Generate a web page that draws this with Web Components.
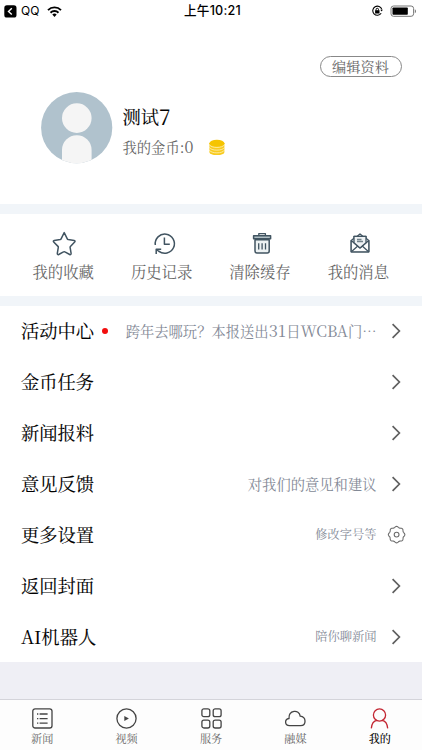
<!DOCTYPE html>
<html lang="zh-CN">
<head>
<meta charset="utf-8">
<title>我的</title>
<style>
html,body{margin:0;padding:0;background:#fff}
body{width:422px;height:750px;overflow:hidden;font-family:"Noto Serif CJK SC","Liberation Serif","Noto Sans CJK SC",serif;color:#000}
</style>
</head>
<body>
<profile-page></profile-page>
<script>
const define=(name,css,html)=>customElements.define(name,class extends HTMLElement{
  constructor(){
    super();
    const t=document.createElement('template');
    t.innerHTML=`<style>*{box-sizing:border-box}svg{display:block;flex:none}${css}</style>${typeof html==='function'?html(this):html}`;
    this.attachShadow({mode:'open'}).append(t.content.cloneNode(true));
  }
});

define('status-bar',`
:host{display:grid;grid-template-columns:1fr auto 1fr;align-items:center;height:22px;padding:0 5px 0 4px;font:12.5px/22px "Inter","Noto Sans CJK SC",sans-serif;box-sizing:border-box}
.l,.r{display:flex;align-items:center}.r{justify-content:flex-end;gap:7px}
.qq{margin:0 7px 0 4px;font-size:12px;width:19px}.time{font-weight:500;font-size:12.6px;letter-spacing:.25px;padding-left:4px}
`,`
<div class="l"><svg width="13" height="13" viewBox="0 0 13 13"><rect x=".3" y=".3" width="12.2" height="12.2" rx="2.6"/><path d="M7.8 3.2 4.5 6.4l3.3 3.2" fill="none" stroke="#fff" stroke-width="1.4"/></svg><span class="qq">QQ</span>
<svg width="15" height="11" viewBox="0 0 15 11" fill="none" stroke="#000" stroke-width="1.9"><path d="M1 4.1a9.2 9.2 0 0 1 13 0M3.5 6.7a5.7 5.7 0 0 1 8 0"/><path d="M7.5 11 5.3 8.6a3.2 3.2 0 0 1 4.4 0Z" fill="#000" stroke="none"/></svg></div>
<span class="time">上午10:21</span>
<div class="r"><svg width="11" height="12" viewBox="0 0 11 12" fill="none" stroke="#000"><path d="M9.8 4.4A4.6 4.6 0 1 0 9.2 8.3" stroke-width="1.1"/><path d="m8.3 4.8 1.3 1.8 1.3-1.8" fill="#000" stroke="none"/><rect x="3.1" y="5.2" width="4.4" height="3.3" fill="#000" stroke="none"/><path d="M4.1 5.4V4.5a1.2 1.2 0 0 1 2.4 0v.9"/></svg>
<svg width="27" height="13" viewBox="0 0 27 13"><rect x="1" y="1" width="22.6" height="10.3" rx="2.5" fill="none" stroke="#777"/><rect x="2.5" y="2.6" width="15.3" height="7.2" rx=".7"/><path d="M24.8 4.2v4c1.6-.6 1.6-3.4 0-4" fill="#777"/></svg></div>`);

define('user-card',`
:host{display:grid;grid-template-columns:71px 1fr;grid-template-rows:22px 71px;row-gap:14px;column-gap:10.5px;padding:34px 20.5px 0 41px;height:182px;box-sizing:border-box}
.edit{grid-column:1/3;justify-self:end;width:82px;height:21px;border:1px solid #888;border-radius:11px;background:#fff;color:#666;font-family:inherit;font-size:14.2px;line-height:18px;padding:0 0 1px;text-align:center;white-space:nowrap}
.info{display:flex;flex-direction:column;padding-top:9px}
.name{font-size:18.3px;line-height:31px;display:flex;-webkit-text-stroke:.1px #000}.name span{font-size:21px}
.coins{display:flex;align-items:center;gap:15px;font-size:14.3px;line-height:29px;color:#666}.coins i{font-style:normal;font-size:16px}
.amount{width:71px;white-space:nowrap}
`,`
<button class="edit">编辑资料</button>
<svg width="72" height="72" viewBox="0 0 72 72"><defs><clipPath id="c"><circle cx="35.7" cy="35.7" r="35.6"/></clipPath></defs><g clip-path="url(#c)"><path fill="#b0c2cd" d="M0 0h72v72H0z"/><g fill="#f5f5f5"><circle cx="35.8" cy="26.1" r="14.8"/><path d="M21 72V58a14.8 14.8 0 0 1 29.6 0v14Z"/></g></g></svg>
<div class="info"><div class="name">测试<span>7</span></div><div class="coins"><span class="amount">我的金币:<i>0</i></span>
<svg width="16" height="17" viewBox="0 0 16 17"><path d="M.4 4.1v8.8c0 4.2 15 4.2 15 0V4.1" fill="#f8cb20"/><ellipse cx="7.9" cy="4.2" rx="7.5" ry="3.5" fill="#f5c400"/><path d="M.2 5.6c1.8 3.8 13.6 3.8 15.4 0M.2 8.3c1.8 3.8 13.6 3.8 15.4 0M.2 11c1.8 3.8 13.6 3.8 15.4 0" fill="none" stroke="#fff6cf" stroke-width=".7"/></svg></div></div>`);

const icons={
star:'<path transform="translate(1.2 0)" d="m13 2.6 3.1 6.2c.2.4.5.6.9.7l6 .9c.9.2 1.1 1 .5 1.6l-4.3 4.4c-.3.3-.4.6-.3 1l1 6c.1 1-.6 1.5-1.4 1.1l-4.8-2.6c-.5-.3-.9-.3-1.4 0l-4.8 2.6c-.8.4-1.5-.1-1.4-1.1l1-6c.1-.4 0-.7-.3-1L2.5 12c-.6-.6-.4-1.4.5-1.6l6-.9c.4-.1.7-.3.9-.7Z"/>',
history:'<path transform="translate(2.5 .3)" d="M3.8 14.7A9.6 9.6 0 1 1 7.2 20.8M4.7 23.7v-4.8h5M5 19.2l3.1 2.5M12.9 7.2v6.7h5.4"/>',
trash:'<g transform="translate(2.6 .2)"><path d="M5.4 9.6h14.2v11.2a2 2 0 0 1-2 2H7.4a2 2 0 0 1-2-2Z" fill="#edf2f3"/><path d="M4 5.6h17v2.9H4Z" fill="#afbec4"/><path d="M9.2 5.2V3.4h6.6v1.8M9.1 13v6.3M12.5 13v6.3M15.9 13v6.3" stroke-width="1.3"/></g>',
mail:'<g transform="translate(2 .3)" stroke-width="1.3"><path d="M4.2 10.3 7 8V6h3.2L13 3.6 15.8 6H19v2l2.8 2.3v11.2H4.2Z" fill="#e8eff1"/><path d="M4.2 10.3V21.5H21.8V10.3L13 17.6Z" fill="#fbfcfc"/><path d="M7 12.4V6h12v6.4l-6 5.2Z" fill="#eef2f4"/><path d="m4.6 21.1 6.2-5.4M21.4 21.1l-6.2-5.4"/><path d="M10 9.2h4.5M10 11.2h6" stroke="#73838b"/></g>'
};
define('shortcut-item',`
:host{display:flex;flex-direction:column;align-items:center;width:98.4px;padding-top:16px;color:#666;font-size:15.35px;line-height:24px;white-space:nowrap}
svg{stroke:#415461;stroke-width:1.5;stroke-linejoin:round;fill:none;margin-bottom:3px;overflow:visible}
`,h=>`<svg width="26" height="26" viewBox="0 0 26 26">${icons[h.getAttribute('icon')]}</svg><slot></slot>`);

define('shortcut-bar',`:host{display:flex;height:102px;border-top:10px solid #f1f5f9;border-bottom:10px solid #f1f5f9;padding-left:14px;box-sizing:border-box;background:#fff}`,`<slot></slot>`);

const gear=Array.from({length:97},(_,i)=>{const a=i*Math.PI/48,r=7.7+.55*Math.cos(8*a);return `${i?'L':'M'}${(9.6+r*Math.cos(a)).toFixed(2)} ${(9.6+r*Math.sin(a)).toFixed(2)}`}).join('');
define('menu-row',`
:host{display:flex;align-items:center;height:50.86px;padding:0 15.5px 0 21px;box-sizing:border-box;white-space:nowrap}
.title{font-size:18.3px;display:flex;align-items:center;-webkit-text-stroke:.1px #000;padding-bottom:2px}
.dot{width:6px;height:6px;border-radius:50%;background:#f20d0d;margin:2px 0 0 8px}
.detail{margin-left:auto;margin-right:10px;color:#838996;font-size:14.3px;padding-bottom:1px}
:host([small]) .detail{font-size:12.25px}
`,h=>`<span class="title"><slot></slot>${h.hasAttribute('dot')?'<span class="dot"></span>':''}</span><span class="detail"><slot name="detail"></slot></span>${h.hasAttribute('gear')?`<svg width="20" height="20" viewBox="0 0 20 20" fill="none" stroke="#6c6c6c" stroke-width="1.1"><path d="${gear}Z"/><circle cx="9.6" cy="9.6" r="2.4"/></svg>`:`<svg width="20" height="20" viewBox="0 0 20 20" fill="none" stroke="#606060" stroke-width="1.7"><path d="m5.6 3.2 6.8 6.8-6.8 6.8"/></svg>`}`);

const tabs={
news:'<rect x="1.8" y="1.8" width="19.2" height="19.2" rx="2.3"/><path d="M6 7h1.3M8.6 7h8M6 11.6h1.3M8.6 11.6h8M6 16.2h1.3M8.6 16.2h8"/>',
video:'<circle cx="11.5" cy="11.5" r="9.6"/><path d="m9.3 9.1 4.6 2.4-4.6 2.4Z" fill="#444" stroke="none"/>',
service:'<rect x="1.9" y="1.8" width="7.9" height="7.9" rx="2"/><rect x="13.2" y="1.8" width="7.9" height="7.9" rx="2"/><rect x="1.9" y="13.1" width="7.9" height="7.9" rx="2"/><rect x="13.2" y="13.1" width="7.9" height="7.9" rx="2"/>',
cloud:'<path d="M5.5 18.7C.5 18.3.3 12.2 5 11.5c-.5-8.5 10.2-9.5 11.2-2.4 6.2.6 6.5 9.3.4 9.6Z"/>',
me:'<circle cx="11.5" cy="8" r="6.1"/><path d="M3.3 21.4c.3-4.3 2.5-7.6 5.8-8.1M13.9 13.3c3.3.5 5.5 3.8 5.8 8.1"/>'
};
define('tab-item',`
:host{flex:1;display:flex;flex-direction:column;align-items:center;padding-top:7px;color:#666;font-size:11.1px;line-height:16px;white-space:nowrap}
svg{fill:none;stroke:#444;stroke-width:1.3}
:host([active]){color:#000;font-weight:500}:host([active]) svg{stroke:#c32632}
`,h=>`<svg width="23" height="23" viewBox="0 0 23 23">${tabs[h.getAttribute('icon')]}</svg><slot></slot>`);
define('tab-bar',`:host{display:flex;height:51px;border-top:1px solid #d4d4da;background:#fdfdfd;box-sizing:border-box}`,`<slot></slot>`);

define('profile-page',`
:host{display:flex;flex-direction:column;width:422px;height:750px;background:#efeff5}
.top,.list{background:#fff}.list{height:356px}tab-bar{margin-top:auto}
.n{font-size:16.5px;letter-spacing:.3px;line-height:1}.w{font-size:15.5px;line-height:1}
`,`
<div class="top"><status-bar></status-bar><user-card></user-card></div>
<shortcut-bar><shortcut-item icon="star">我的收藏</shortcut-item><shortcut-item icon="history">历史记录</shortcut-item><shortcut-item icon="trash">清除缓存</shortcut-item><shortcut-item icon="mail">我的消息</shortcut-item></shortcut-bar>
<div class="list">
<menu-row dot>活动中心<span slot="detail">跨年去哪玩？本报送出<span class="n">31</span>日<span class="w">WCBA</span>门…</span></menu-row>
<menu-row>金币任务</menu-row>
<menu-row>新闻报料</menu-row>
<menu-row>意见反馈<span slot="detail">对我们的意见和建议</span></menu-row>
<menu-row gear small>更多设置<span slot="detail">修改字号等</span></menu-row>
<menu-row>返回封面</menu-row>
<menu-row small>AI机器人<span slot="detail">陪你聊新闻</span></menu-row>
</div>
<tab-bar><tab-item icon="news">新闻</tab-item><tab-item icon="video">视频</tab-item><tab-item icon="service">服务</tab-item><tab-item icon="cloud">融媒</tab-item><tab-item icon="me" active>我的</tab-item></tab-bar>`);
</script>
</body>
</html>
